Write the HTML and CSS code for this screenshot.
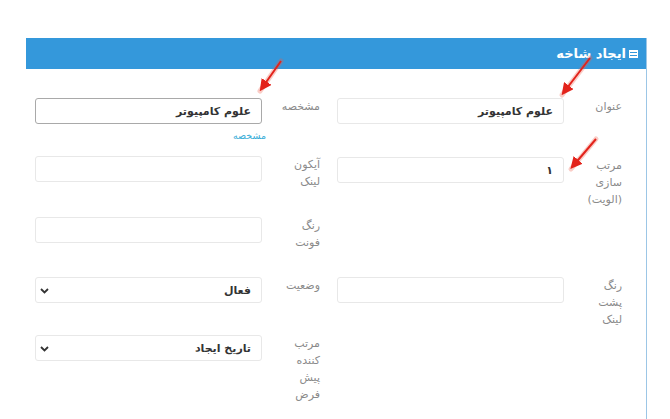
FILE: index.html
```html
<!DOCTYPE html>
<html lang="fa" dir="rtl">
<head>
    <meta charset="UTF-8">
    <title>ایجاد شاخه</title>
    <link rel="stylesheet" href="styles.css">
</head>
<body>
    <div class="panel">
        <div class="panel-heading">
            <svg class="list-icon" width="9" height="8" viewBox="0 0 9 8">
                <rect x="0" y="0" width="9" height="8" fill="#fff"/>
                <rect x="1" y="2" width="7" height="1" fill="#3498db"/>
                <rect x="1" y="5" width="7" height="1" fill="#3498db"/>
            </svg>
            <span>ایجاد شاخه</span>
        </div>

        <div class="panel-body">
            <!-- right column -->
            <div class="field col-right row-1">
                <label>عنوان</label>
                <div class="control">
                    <input type="text" class="form-input" value="علوم کامپیوتر">
                </div>
            </div>
            <div class="field col-right row-2">
                <label>مرتب سازی (الویت)</label>
                <div class="control">
                    <input type="text" class="form-input" value="۱">
                </div>
            </div>
            <div class="field col-right row-4">
                <label>رنگ پشت لینک</label>
                <div class="control">
                    <input type="text" class="form-input">
                </div>
            </div>

            <!-- left column -->
            <div class="field col-left row-1">
                <label>مشخصه</label>
                <div class="control">
                    <input type="text" class="form-input focused" value="علوم کامپیوتر">
                    <div class="help-text">مشخصه</div>
                </div>
            </div>
            <div class="field col-left row-2 shift-up">
                <label>آیکون لینک</label>
                <div class="control">
                    <input type="text" class="form-input">
                </div>
            </div>
            <div class="field col-left row-3">
                <label>رنگ فونت</label>
                <div class="control">
                    <input type="text" class="form-input">
                </div>
            </div>
            <div class="field col-left row-4">
                <label>وضعیت</label>
                <div class="control select-wrap">
                    <select class="form-input">
                        <option>فعال</option>
                    </select>
                    <svg class="chevron" width="9" height="6" viewBox="0 0 9 6"><path d="M1 1 L4.5 4.5 L8 1" fill="none" stroke="#333" stroke-width="1.8"/></svg>
                </div>
            </div>
            <div class="field col-left row-5 shift-up">
                <label>مرتب کننده پیش فرض</label>
                <div class="control select-wrap">
                    <select class="form-input">
                        <option>تاریخ ایجاد</option>
                    </select>
                    <svg class="chevron" width="9" height="6" viewBox="0 0 9 6"><path d="M1 1 L4.5 4.5 L8 1" fill="none" stroke="#333" stroke-width="1.8"/></svg>
                </div>
            </div>
        </div>
    </div>

    <!-- red annotation arrows drawn over the screenshot -->
    <svg class="arrows" width="670" height="419" viewBox="0 0 670 419">
        <defs>
            <marker id="head" markerWidth="6" markerHeight="6" refX="4" refY="3" orient="auto">
                <path d="M0 0 L6 3 L0 6 Z" fill="#e3231b"/>
            </marker>
        </defs>
        <g stroke="rgba(240,90,70,0.3)" stroke-width="5" stroke-linecap="round">
            <line x1="281" y1="61" x2="260" y2="91"/>
            <line x1="590" y1="58" x2="562" y2="95"/>
            <line x1="596" y1="139" x2="571" y2="169"/>
        </g>
        <g stroke="#e3231b" stroke-width="2" marker-end="url(#head)">
            <line x1="281" y1="61" x2="262" y2="88"/>
            <line x1="590" y1="58" x2="564" y2="92"/>
            <line x1="596" y1="139" x2="573" y2="166"/>
        </g>
    </svg>
</body>
</html>
```

FILE: styles.css
```css
body {
    margin: 0;
    background-color: #fff;
    font-family: "DejaVu Sans", sans-serif;
    color: #333;
    position: relative;
    height: 419px;
    overflow: hidden;
}

/* Panel */
.panel {
    margin: 38px 23px 0 26px;
    border-right: 1px solid #9cc6e6;
    height: 381px;
}

.panel-heading {
    background-color: #3498db;
    height: 31px;
    display: flex;
    align-items: center;
    padding-right: 8px;
    color: #fff;
    font-size: 13px;
    font-weight: bold;
}

.list-icon {
    margin-left: 3px;
}

.panel-body {
    display: grid;
    grid-template-columns: 285px 286px;
    grid-template-rows: 59px 60px 60px 59px auto;
    column-gap: 17px;
    padding: 29px 24px 0 8px;
}

/* Form fields */
.field {
    display: flex;
    align-items: flex-start;
}

.col-right { grid-column: 1; }
.col-left { grid-column: 2; }
.row-1 { grid-row: 1; }
.row-2 { grid-row: 2; }
.row-3 { grid-row: 3; }
.row-4 { grid-row: 4; }
.row-5 { grid-row: 5; }

.shift-up {
    margin-top: -1px;
}

.field label {
    flex: 0 0 auto;
    width: 38px;
    padding-left: 20px;
    padding-top: 0;
    font-size: 11px;
    line-height: 17px;
    color: #8a8a8a;
}

.control {
    width: 227px;
    position: relative;
}

.form-input {
    display: block;
    box-sizing: border-box;
    width: 227px;
    height: 26px;
    padding: 0 10px;
    border: 1px solid #e8e8e8;
    border-radius: 3px;
    background-color: #fff;
    font-family: "DejaVu Sans", sans-serif;
    font-size: 11px;
    font-weight: bold;
    color: #333;
    direction: rtl;
    text-align: right;
    outline: none;
}

.form-input.focused {
    border-color: #a9a9a9;
}

.help-text {
    margin-top: 6px;
    margin-right: -4px;
    font-size: 9.5px;
    color: #3aaed8;
}

/* Selects */
select.form-input {
    -webkit-appearance: none;
    appearance: none;
}

.select-wrap .chevron {
    position: absolute;
    left: 5px;
    top: 11px;
}

/* Annotation overlay */
.arrows {
    position: absolute;
    top: 0;
    left: 0;
    pointer-events: none;
}
```
